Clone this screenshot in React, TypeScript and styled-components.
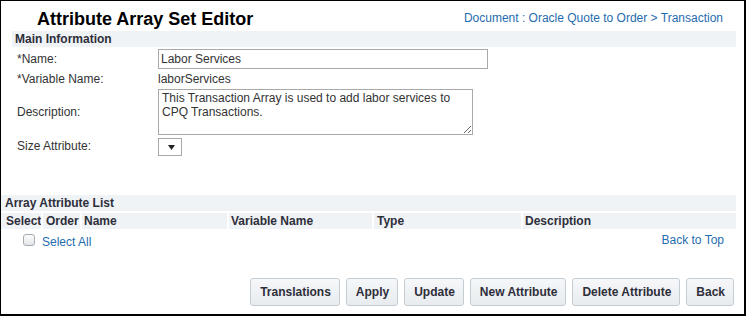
import React from 'react';
import styled, { createGlobalStyle } from 'styled-components';

const GlobalStyle = createGlobalStyle`
    body {
        margin: 0;
        background: #fff;
        font-family: "Liberation Sans", Arial, sans-serif;
        color: #333;
    }
`;

const linkBlue = '#1f6cae';
const bandBg = '#eff3f6';

const Frame = styled.div`
    width: 746px;
    height: 316px;
    box-sizing: border-box;
    border-left: 1px solid #000;
    border-top: 1px solid #000;
    border-right: 2px solid #000;
    border-bottom: 2px solid #000;
    font-size: 12px;
    overflow: hidden;
`;

const Header = styled.div`
    display: flex;
    justify-content: space-between;
    align-items: flex-start;
    padding: 7px 21px 1px 36px;
`;

const Title = styled.h1`
    margin: 0;
    font-size: 18px;
    line-height: 22px;
    font-weight: bold;
    color: #000;
`;

const Crumb = styled.a`
    padding-top: 3px;
    font-size: 12px;
    line-height: 14px;
    color: ${linkBlue};
    text-decoration: none;
`;

const MainSection = styled.section`
    margin-left: 11px;
    width: 724px;
`;

const SectionBand = styled.div<{ $indent: number }>`
    height: 16px;
    line-height: 16px;
    padding-left: ${p => p.$indent}px;
    background: ${bandBg};
    font-weight: bold;
    color: #2e2e3a;
`;

const FormGrid = styled.div`
    display: grid;
    grid-template-columns: 141px 1fr;
    align-items: center;
    row-gap: 1px;
    padding: 2px 0 0 5px;
`;

const Label = styled.label`
    line-height: 18px;
    color: #333;
`;

const Value = styled.span`
    line-height: 18px;
    color: #333;
`;

const TextInput = styled.input`
    box-sizing: border-box;
    width: 330px;
    height: 20px;
    margin: 0;
    padding: 0 2px;
    border: 1px solid #a9a9a9;
    font-family: inherit;
    font-size: 12px;
    color: #333;
    outline: none;
`;

const TextArea = styled.textarea`
    box-sizing: border-box;
    width: 315px;
    height: 46px;
    margin: 0;
    padding: 1px 3px;
    border: 1px solid #a9a9a9;
    font-family: inherit;
    font-size: 12px;
    line-height: 14px;
    color: #333;
    outline: none;
    display: block;
`;

const SelectBox = styled.div`
    box-sizing: border-box;
    width: 24px;
    height: 18px;
    margin-top: 2px;
    border: 1px solid #a9a9a9;
    display: flex;
    align-items: center;
    justify-content: center;
    padding-left: 2px;
`;

const ListSection = styled.section`
    margin-top: 39px;
    width: 735px;
`;

const HeaderRow = styled.div`
    display: grid;
    grid-template-columns: 40px 37px 145px 143px 147px 1fr;
    column-gap: 2px;
    margin-top: 2px;
`;

const HeaderCell = styled.div<{ $pad?: number }>`
    height: 16px;
    line-height: 16px;
    padding-left: ${p => p.$pad ?? 2}px;
    background: ${bandBg};
    font-weight: bold;
    color: #2e2e3a;
    white-space: nowrap;
    overflow: hidden;
`;

const SelectRow = styled.div`
    display: flex;
    justify-content: space-between;
    align-items: flex-start;
    padding: 5px 12px 0 22px;
`;

const SelectAll = styled.div`
    display: flex;
    align-items: flex-start;
    gap: 7px;
`;

const CheckBox = styled.input`
    appearance: none;
    box-sizing: border-box;
    width: 12px;
    height: 12px;
    margin: 0;
    border: 1px solid #a7adb3;
    border-radius: 3px;
    background: linear-gradient(#fdfdfd, #e2e5e8);
`;

const Link = styled.a<{ $lift?: number }>`
    line-height: 16px;
    margin-top: ${p => -(p.$lift ?? 0)}px;
    color: ${linkBlue};
    text-decoration: none;
    cursor: pointer;
`;

const ButtonBar = styled.div`
    display: flex;
    justify-content: flex-end;
    gap: 6px;
    margin-top: 28px;
    padding-right: 10px;
`;

const Button = styled.button`
    box-sizing: border-box;
    height: 28px;
    margin: 0;
    padding: 0 8px 0 9px;
    border: 1px solid #c5cdd4;
    border-radius: 3px;
    background: linear-gradient(#f5f7f9, #e8ecef);
    font-family: inherit;
    font-size: 12px;
    font-weight: bold;
    color: #2e2e3a;
    cursor: pointer;
`;

const columns = [
    { title: 'Select', pad: 5 },
    { title: 'Order', pad: 3 },
    { title: 'Name', pad: 2 },
    { title: 'Variable Name', pad: 2 },
    { title: 'Type', pad: 3 },
    { title: 'Description', pad: 2 },
];

const buttons = ['Translations', 'Apply', 'Update', 'New Attribute', 'Delete Attribute', 'Back'];

const App: React.FC = () => {
    return (
        <>
            <GlobalStyle />
            <Frame>
                <Header>
                    <Title>Attribute Array Set Editor</Title>
                    <Crumb>Document : Oracle Quote to Order &gt; Transaction</Crumb>
                </Header>

                <MainSection>
                    <SectionBand $indent={3}>Main Information</SectionBand>
                    <FormGrid>
                        <Label>*Name:</Label>
                        <TextInput defaultValue="Labor Services" />

                        <Label>*Variable Name:</Label>
                        <Value>laborServices</Value>

                        <Label>Description:</Label>
                        <TextArea defaultValue="This Transaction Array is used to add labor services to CPQ Transactions." />

                        <Label>Size Attribute:</Label>
                        <SelectBox>
                            <svg width="7" height="5" viewBox="0 0 7 5">
                                <polygon points="0,0 7,0 3.5,5" fill="#222" />
                            </svg>
                        </SelectBox>
                    </FormGrid>
                </MainSection>

                <ListSection>
                    <SectionBand $indent={4}>Array Attribute List</SectionBand>
                    <HeaderRow>
                        {columns.map(c => (
                            <HeaderCell key={c.title} $pad={c.pad}>{c.title}</HeaderCell>
                        ))}
                    </HeaderRow>
                    <SelectRow>
                        <SelectAll>
                            <CheckBox type="checkbox" />
                            <Link>Select All</Link>
                        </SelectAll>
                        <Link $lift={2}>Back to Top</Link>
                    </SelectRow>
                </ListSection>

                <ButtonBar>
                    {buttons.map(label => (
                        <Button key={label}>{label}</Button>
                    ))}
                </ButtonBar>
            </Frame>
        </>
    );
};

export default App;
